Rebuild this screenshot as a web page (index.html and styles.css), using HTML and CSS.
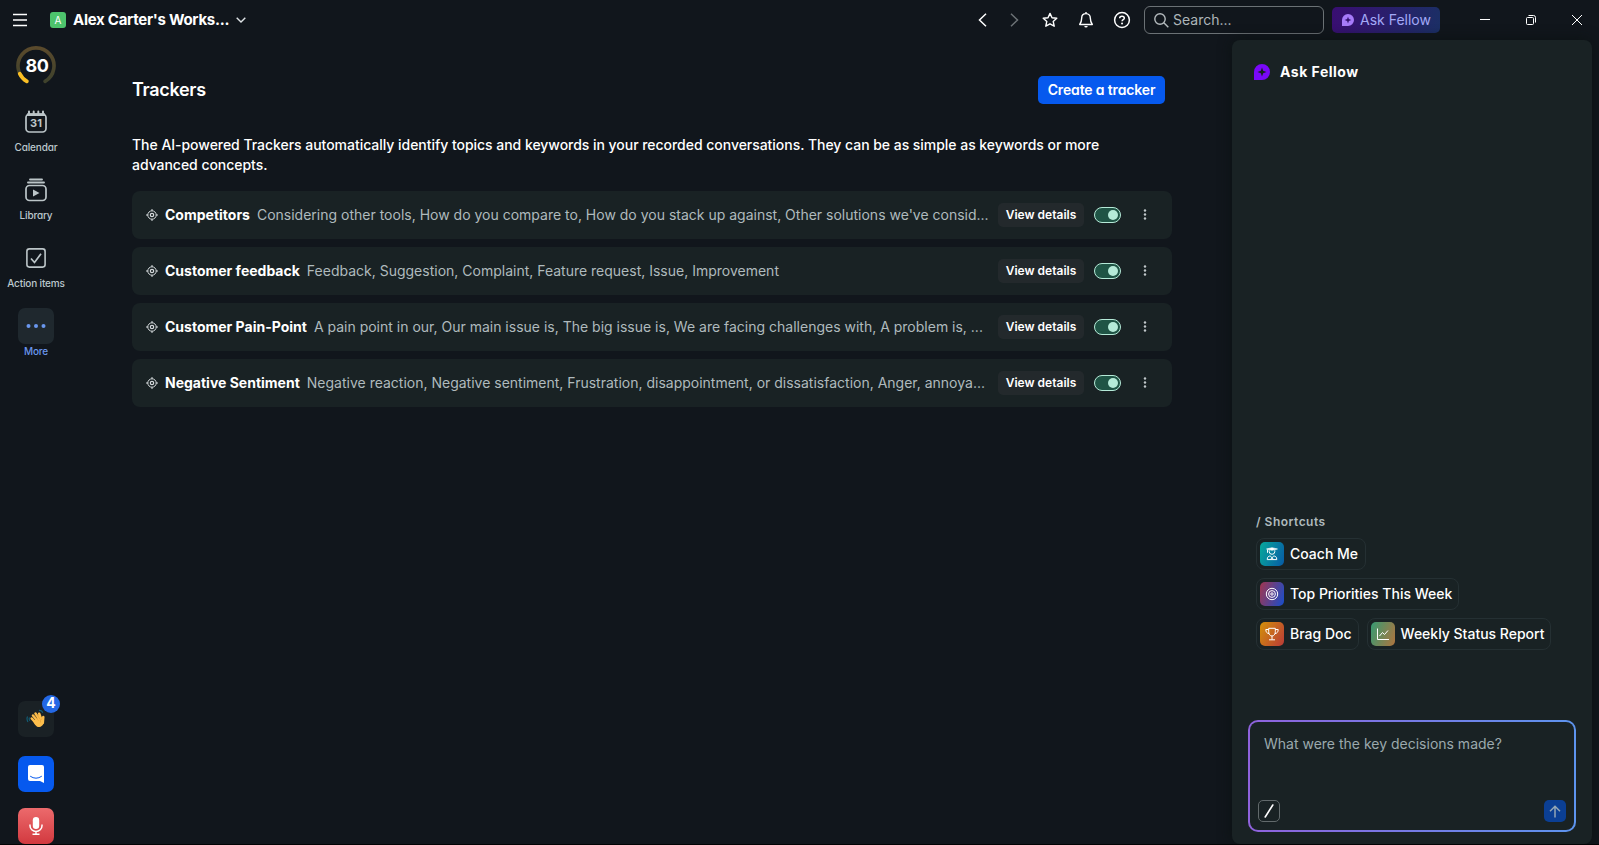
FILE: index.html
```html
<!DOCTYPE html>
<html lang="en">
<head>
    <meta charset="UTF-8">
    <meta name="viewport" content="width=device-width, initial-scale=1.0">
    <title>Trackers</title>
    <link rel="stylesheet" href="styles.css">
</head>
<body>

<header class="topbar">
    <div class="topbar-left">
        <svg class="menu" width="14" height="14" viewBox="0 0 14 14" fill="none" stroke="#fff" stroke-width="1.5"><path d="M0 1.5h14M0 7h14M0 12.5h14"/></svg>
        <span class="avatar">A</span>
        <span class="workspace">Alex Carter's Works...</span>
        <svg width="10" height="6" viewBox="0 0 10 6" fill="none" stroke="#dfe3e6" stroke-width="1.4"><path d="M.7.7L5 5 9.3.7"/></svg>
    </div>
    <div class="topbar-right">
        <svg class="nav-back" width="9" height="14" viewBox="0 0 9 14" fill="none" stroke="#fff" stroke-width="1.5"><path d="M8 .8L1.5 7 8 13.2"/></svg>
        <svg class="nav-next" width="9" height="14" viewBox="0 0 9 14" fill="none" stroke="#6c7276" stroke-width="1.5"><path d="M1 .8L7.5 7 1 13.2"/></svg>
        <svg class="nav-star" width="16" height="16" viewBox="0 0 16 16" fill="none" stroke="#fff" stroke-width="1.4" stroke-linejoin="round"><path d="M8 1.4l2 4.3 4.8.5-3.6 3.2 1 4.8L8 11.8l-4.2 2.4 1-4.8L1.2 6.2 6 5.7z"/></svg>
        <svg class="nav-bell" width="16" height="16" viewBox="0 0 16 16" fill="none" stroke="#fff" stroke-width="1.4" stroke-linejoin="round"><path d="M8 0v1.6M8 1.6c-2.700 0-4.300 2-4.300 4.400 0 3.300-.9 4.800-2 6.500h12.600c-1.100-1.700-2-3.200-2-6.500 0-2.400-1.600-4.400-4.300-4.400z"/><path d="M6.300 14.100h3.400a1.700 1.500 0 0 1-3.400 0z" fill="#fff" stroke="none"/></svg>
        <svg class="nav-help" width="18" height="18" viewBox="0 0 18 18" fill="none" stroke="#fff" stroke-width="1.5"><circle cx="9" cy="9" r="7.400"/><path d="M6.700 7.300c0-1.300 1-2.100 2.300-2.100s2.300.8 2.300 2c0 1.500-2.200 1.500-2.200 3"/><circle cx="9.050" cy="12.400" r="1" fill="#fff" stroke="none"/></svg>
        <div class="search">
            <svg width="15" height="15" viewBox="0 0 15 15" fill="none" stroke="#b4babd" stroke-width="1.4"><circle cx="6" cy="6" r="5.200"/><path d="M9.800 9.800l4.500 4.500"/></svg>
            <span>Search...</span>
        </div>
        <button class="ask-btn">
            <svg width="12" height="12" viewBox="0 0 16 16"><path fill="#a77bfa" fill-rule="evenodd" d="M8 0a8 8 0 1 1 0 16H0V8a8 8 0 0 1 8-8zM8 3.500L6.800 6.800 3.500 8l3.300 1.200L8 12.500l1.200-3.300L12.500 8 9.200 6.800z"/></svg>
            <span>Ask Fellow</span>
        </button>
        <div class="win-buttons">
            <span><svg width="10" height="10" viewBox="0 0 10 10" stroke="#fff" fill="none"><path d="M0 4.500h10"/></svg></span>
            <span><svg width="10" height="10" viewBox="0 0 10 10" stroke="#fff" fill="none"><rect x=".5" y="2.500" width="7" height="7" rx="1"/><path d="M2.500.5h5a2 2 0 0 1 2 2v5"/></svg></span>
            <span><svg width="10" height="10" viewBox="0 0 10 10" stroke="#fff" fill="none"><path d="M0 0l10 10M10 0L0 10"/></svg></span>
        </div>
    </div>
</header>

<div class="layout">
    <nav class="sidebar">
        <div class="score">
            <svg width="42" height="42" viewBox="0 0 42 42" fill="none" stroke-width="3.600" stroke-linecap="round">
                <defs><linearGradient id="ring" x1="0" y1="0" x2="0" y2="1"><stop offset="0" stop-color="#5a4a2c"/><stop offset="1" stop-color="#3f422c"/></linearGradient></defs>
                <path d="M11.900 36.400A18 18 0 1 1 30.100 36.400" stroke="url(#ring)"/>
                <path d="M11.900 36.400A18 18 0 0 1 4.700 28.600" stroke="#fbbf24"/>
            </svg>
            <span>80</span>
        </div>
        <a class="nav-item">
            <span class="nav-icon"><svg width="22" height="24" viewBox="0 0 22 24" fill="none" stroke="#bcc5c8"><rect x="1" y="4" width="20" height="18" rx="3.500" stroke-width="1.700"/><path d="M2 4.700h18" stroke-width="2.600"/><path d="M4 1.500v3M8.700 1.500v3M13.300 1.500v3M18 1.500v3" stroke-width="2" stroke-linecap="round"/><text x="11" y="17" class="cal-num">31</text></svg></span>
            <span class="nav-label">Calendar</span>
        </a>
        <a class="nav-item">
            <span class="nav-icon"><svg width="22" height="24" viewBox="0 0 22 24" fill="none" stroke="#bcc5c8"><path d="M5 1.500h12M3 4.500h16" stroke-width="1.900" stroke-linecap="round"/><rect x="1" y="7.500" width="20" height="15" rx="3.500" stroke-width="1.700"/><path d="M8 11.500v7l6.500-3.500z" fill="#bcc5c8" stroke="none"/></svg></span>
            <span class="nav-label">Library</span>
        </a>
        <a class="nav-item">
            <span class="nav-icon"><svg width="20" height="20" viewBox="0 0 20 20" fill="none" stroke="#bcc5c8"><rect x=".9" y=".9" width="18.200" height="18.200" rx="2.500" stroke-width="1.600"/><path d="M5 10.500l3.500 4L15 5.700" stroke-width="1.700"/></svg></span>
            <span class="nav-label">Action items</span>
        </a>
        <a class="nav-item active">
            <span class="nav-icon"><svg width="20" height="6" viewBox="0 0 20 6" fill="#6a97ee"><circle cx="2.500" cy="3" r="2"/><circle cx="10" cy="3" r="2"/><circle cx="17.500" cy="3" r="2"/></svg></span>
            <span class="nav-label">More</span>
        </a>
        <div class="sidebar-bottom">
            <div class="tile tile-wave">
                <svg width="20" height="20" viewBox="0 0 20 20">
                    <path d="M1.500 7.500Q.3 10 2 13M3.500 8.500q-.8 1.500.2 3.200M13 1.500q2.800-.5 3.800 2.300" fill="none" stroke="#12617a" stroke-width="1.100"/>
                    <g fill="none" stroke="#fdbe4c" stroke-width="2.500" stroke-linecap="round"><path d="M5.700 9.500l4.500 5M7 6.500l5 6M9.500 4.500l4.500 6.500M13.200 4.700l2 5.500M17.300 8l-.5 6"/></g>
                    <path d="M7 12l7.500-4.500 2.500 3c2 3-.3 7-3.500 7.500-3.500.4-5-3-6.500-6z" fill="#fdbe4c"/>
                    <path d="M8.200 6.500l4.300 5M10.800 5.400l3.400 5M16 9.500q-2.300 1.500-1.500 4" fill="none" stroke="#dc9530" stroke-width=".5"/>
                </svg>
                <span class="badge">4</span>
            </div>
            <div class="tile tile-chat">
                <svg width="16" height="18" viewBox="0 0 16 18"><path fill="#fff" d="M2 0h12a2 2 0 0 1 2 2V18l-4-2H2a2 2 0 0 1-2-2V2a2 2 0 0 1 2-2z"/><path d="M2.500 11.400q5.500 3.800 11 0" fill="none" stroke="#0659ee" stroke-linecap="round"/></svg>
            </div>
            <div class="tile tile-mic">
                <svg width="14" height="18" viewBox="0 0 14 18"><rect x="3.800" width="6.400" height="12" rx="3.200" fill="#fff"/><path d="M1 7.500v1.200a6 5.700 0 0 0 12 0V7.500M7 14.500v2.700M3.500 17.200h7" fill="none" stroke="#fff" stroke-width="1.500"/></svg>
            </div>
        </div>
    </nav>

    <main class="content">
        <div class="content-header">
            <h1>Trackers</h1>
            <button class="create-btn">Create a tracker</button>
        </div>
        <p class="intro">The AI-powered Trackers automatically identify topics and keywords in your recorded conversations. They can be as simple as keywords or more<br>advanced concepts.</p>
        <div class="tracker-list" id="trackerList"></div>
    </main>

    <aside class="ask-panel">
        <div class="ask-title">
            <svg width="16" height="16" viewBox="0 0 16 16"><path fill="#7a08fa" fill-rule="evenodd" d="M8 0a8 8 0 1 1 0 16H0V8a8 8 0 0 1 8-8zM8 3.500L6.800 6.800 3.500 8l3.300 1.200L8 12.500l1.200-3.300L12.500 8 9.200 6.800z"/></svg>
            <h2>Ask Fellow</h2>
        </div>
        <div class="shortcuts">
            <h3>/ Shortcuts</h3>
            <div class="chips">
                <div class="chip chip-coach">
                    <span class="chip-icon"><svg width="12" height="14" viewBox="0 0 12 14" fill="none" stroke="#fff"><path d="M.5 2L6 .7 11.500 2 6 3.300z" fill="#fff" stroke-width=".6"/><path d="M1.500 2.500v3.300M3.200 3.300v1.200a2.800 2.800 0 0 0 5.600 0V3.300M1.200 12.600c0-3 1.800-3.600 3-3.600L6 10.700 7.800 9c1.200 0 3 .6 3 3.600zM4.500 12.500L6 10.700l1.500 1.800"/></svg></span>
                    <span class="chip-text">Coach Me</span>
                </div>
                <div class="chip chip-top">
                    <span class="chip-icon"><svg width="14" height="14" viewBox="0 0 14 14" fill="none" stroke="#fff"><circle cx="7" cy="7" r="5.700"/><circle cx="7" cy="7" r="3.400"/><circle cx="7" cy="7" r="1.200"/></svg></span>
                    <span class="chip-text">Top Priorities This Week</span>
                </div>
                <div class="chip chip-brag">
                    <span class="chip-icon"><svg width="14" height="14" viewBox="0 0 14 14" fill="none" stroke="#fff"><path d="M3.700 1.300h6.600v3.500c0 2.500-1.400 4.200-3.300 4.200S3.700 7.300 3.700 4.800zM3.700 2.500H.8c0 2.500 1.200 4 3.400 4.200M10.300 2.500h2.900c0 2.500-1.200 4-3.400 4.200M7 9v3.500M4 12.800h6"/></svg></span>
                    <span class="chip-text">Brag Doc</span>
                </div>
                <div class="chip chip-weekly">
                    <span class="chip-icon"><svg width="14" height="14" viewBox="0 0 14 14" fill="none" stroke="#fff"><path d="M1.500 1.500v11h11.500M3.500 9l3-3.500 2 2 3.500-4"/></svg></span>
                    <span class="chip-text">Weekly Status Report</span>
                </div>
            </div>
        </div>
        <div class="prompt">
            <p>What were the key decisions made?</p>
            <div class="prompt-actions">
                <span class="slash"><svg width="10" height="14" viewBox="0 0 10 14"><path d="M1.200 13L8.800 1" stroke="#fff" stroke-width="1.600" stroke-linecap="round"/></svg></span>
                <span class="send"><svg width="12" height="13" viewBox="0 0 12 13" fill="none" stroke="#94a6b5" stroke-width="1.500"><path d="M6 12.500V1.500M1 6.300L6 1.300l5 5"/></svg></span>
            </div>
        </div>
    </aside>
</div>

<script>
    const trackers = [
        { name: "Competitors", keywords: "Considering other tools, How do you compare to, How do you stack up against, Other solutions we've consid..." },
        { name: "Customer feedback", keywords: "Feedback, Suggestion, Complaint, Feature request, Issue, Improvement" },
        { name: "Customer Pain-Point", keywords: "A pain point in our, Our main issue is, The big issue is, We are facing challenges with, A problem is, ..." },
        { name: "Negative Sentiment", keywords: "Negative reaction, Negative sentiment, Frustration, disappointment, or dissatisfaction, Anger, annoya..." }
    ];

    const trackerList = document.getElementById("trackerList");

    trackers.forEach((tracker) => {
        const row = document.createElement("div");
        row.classList.add("tracker");
        row.innerHTML = `
            <svg width="12" height="12" viewBox="0 0 12 12" fill="none" stroke="#d5dadc"><circle cx="6" cy="6" r="4.200"/><circle cx="6" cy="6" r="1.700" stroke-width="1.200"/><path d="M6 0v2M6 10v2M0 6h2M10 6h2"/></svg>
            <span class="tracker-name">${tracker.name}</span>
            <span class="tracker-keywords">${tracker.keywords}</span>
            <button class="details-btn">View details</button>
            <span class="toggle"></span>
            <svg class="dots" width="4" height="12" viewBox="0 0 4 12" fill="#c0c7ca"><circle cx="2" cy="1.500" r="1.200"/><circle cx="2" cy="5.500" r="1.200"/><circle cx="2" cy="9.500" r="1.200"/></svg>`;
        trackerList.appendChild(row);
    });
</script>

</body>
</html>
```
FILE: styles.css
```css
* {
    box-sizing: border-box;
}

body {
    font-family: Inter, 'Liberation Sans', sans-serif;
    margin: 0;
    height: 845px;
    overflow: hidden;
    background-color: #11161c;
    color: #fff;
    font-size: 14px;
    border-bottom: 1px solid #020304;
}

h1, h2, h3, p {
    margin: 0;
}

button {
    font-family: inherit;
    border: none;
    color: #fff;
    padding: 0;
}

svg {
    display: block;
    flex-shrink: 0;
}

.topbar {
    height: 40px;
    display: flex;
    align-items: center;
    justify-content: space-between;
}

.topbar-left {
    display: flex;
    align-items: center;
    padding-left: 13px;
}

.avatar {
    width: 16px;
    height: 16px;
    margin: 0 7px 0 23px;
    border-radius: 3px;
    background-color: #4dc36c;
    font-size: 10px;
    line-height: 16px;
    text-align: center;
}

.workspace {
    width: 163px;
    padding-bottom: 1px;
    font-size: 15px;
    font-weight: 700;
    letter-spacing: -0.27px;
    white-space: nowrap;
}

.topbar-right {
    display: flex;
    align-items: center;
}

.nav-back {
    margin-right: 23px;
}

.nav-next {
    margin-right: 23px;
}

.nav-star {
    margin-right: 20px;
}

.nav-bell {
    margin-right: 19px;
}

.nav-help {
    margin-right: 13px;
}

.search {
    width: 180px;
    height: 28px;
    display: flex;
    align-items: center;
    gap: 4px;
    padding-left: 9px;
    border: 1px solid #6b7175;
    border-radius: 6px;
    color: #adb5b9;
}

.search span,
.ask-btn span {
    padding-bottom: 1px;
}

.ask-btn {
    width: 108px;
    height: 26px;
    margin: 0 22px 0 8px;
    padding-left: 10px;
    display: flex;
    align-items: center;
    gap: 6px;
    border-radius: 5px;
    background: linear-gradient(100deg, #390e72, #1b2f65);
    color: #a3a9f7;
    font-size: 14px;
    white-space: nowrap;
}

.win-buttons {
    display: flex;
    margin-right: -1px;
}

.win-buttons span {
    width: 46px;
    display: flex;
    justify-content: center;
}

.layout {
    display: flex;
    height: 804px;
}

/* left rail */
.sidebar {
    width: 72px;
    display: flex;
    flex-direction: column;
    align-items: center;
}

.score {
    width: 42px;
    height: 42px;
    margin: 5px 0 17px;
    display: grid;
    place-items: center;
}

.score > * {
    grid-area: 1 / 1;
}

.score span {
    font-size: 18px;
    font-weight: 700;
    letter-spacing: -0.5px;
    margin-left: 2px;
    padding-bottom: 2px;
}

.nav-item {
    height: 68px;
    width: 72px;
    display: flex;
    flex-direction: column;
    align-items: center;
    color: #bcc8cd;
}

.nav-icon {
    width: 36px;
    height: 36px;
    display: flex;
    align-items: center;
    justify-content: center;
    border-radius: 7px;
}

.nav-label {
    font-size: 10px;
    font-weight: 500;
    line-height: 14px;
    letter-spacing: -0.15px;
    white-space: nowrap;
    font-feature-settings: "cv11";
}

.cal-num {
    font-size: 11px;
    font-weight: 700;
    text-anchor: middle;
    fill: #bcc5c8;
    stroke: none;
}

.active {
    color: #6a97ee;
}

.active .nav-icon {
    background-color: #1f282e;
}

.sidebar-bottom {
    margin-top: auto;
    display: flex;
    flex-direction: column;
}

.tile {
    width: 36px;
    height: 36px;
    display: flex;
    align-items: center;
    justify-content: center;
    border-radius: 7px;
}

.tile-wave {
    position: relative;
    background-color: #1a2125;
    margin-bottom: 19px;
}

.tile-chat {
    background-color: #0659ee;
    margin-bottom: 16px;
}

.tile-mic {
    background: linear-gradient(#ec6a6c, #d2393f);
}

.badge {
    position: absolute;
    top: -6px;
    right: -6px;
    width: 18px;
    height: 18px;
    border-radius: 50%;
    background-color: #2468e5;
    font-size: 14px;
    font-weight: 700;
    line-height: 16px;
    text-align: center;
}

/* trackers */
.content {
    width: 1160px;
    padding: 36px 60px 0;
}

.content-header {
    display: flex;
    align-items: center;
    justify-content: space-between;
    padding-right: 7px;
    margin-bottom: 31px;
}

.content-header h1 {
    font-size: 18px;
    font-weight: 600;
    letter-spacing: -0.3px;
    padding-bottom: 1px;
}

.create-btn {
    width: 127px;
    height: 28px;
    padding-bottom: 1px;
    border-radius: 5px;
    background-color: #0659ee;
    font-size: 14px;
    font-weight: 600;
    letter-spacing: -0.15px;
    white-space: nowrap;
    font-feature-settings: "cv11";
}

.intro {
    font-size: 14px;
    font-weight: 500;
    line-height: 20px;
    letter-spacing: -0.035px;
    white-space: nowrap;
    margin-bottom: 16px;
}

.tracker-list {
    display: flex;
    flex-direction: column;
    gap: 8px;
}

.tracker {
    height: 48px;
    display: flex;
    align-items: center;
    padding: 0 25px 0 14px;
    border-radius: 8px;
    background-color: #192224;
}

.tracker-name {
    margin: 0 7px;
    padding-bottom: 1px;
    font-weight: 700;
    white-space: nowrap;
}

.tracker-keywords {
    flex: 1;
    width: 0;
    padding-bottom: 1px;
    color: #afbabd;
    white-space: nowrap;
}

.details-btn {
    width: 86px;
    height: 24px;
    padding-bottom: 1px;
    border-radius: 5px;
    background-color: #23292c;
    font-size: 12px;
    font-weight: 600;
    white-space: nowrap;
}

.toggle {
    width: 27px;
    height: 16px;
    margin: 0 22px 0 10px;
    padding: 2px;
    display: flex;
    justify-content: flex-end;
    border: 1px solid #b5ead8;
    border-radius: 8px;
    background-color: #1f5445;
}

.toggle::after {
    content: '';
    width: 10px;
    height: 10px;
    border-radius: 50%;
    background-color: #b5ead8;
}

/* ask panel */
.ask-panel {
    width: 360px;
    display: flex;
    flex-direction: column;
    padding: 24px 16px 12px;
    border-radius: 8px;
    background-color: #192224;
    box-shadow: 0 0 14px rgba(10, 18, 16, 0.8);
}

.ask-title {
    display: flex;
    gap: 10px;
    padding-left: 6px;
    align-items: center;
    height: 16px;
}

.ask-title h2 {
    font-size: 14px;
    font-weight: 700;
    letter-spacing: 0.5px;
    padding-bottom: 2px;
}

.shortcuts {
    margin-top: auto;
    margin-bottom: 70px;
    padding-left: 8px;
}

.shortcuts h3 {
    font-size: 12px;
    font-weight: 600;
    line-height: 16px;
    letter-spacing: 0.5px;
    margin-bottom: 8px;
    color: #afbabd;
}

.chips {
    display: flex;
    flex-wrap: wrap;
    gap: 8px;
}

.chip {
    height: 32px;
    display: flex;
    align-items: center;
    gap: 6px;
    padding: 0 6px 0 3px;
    border: 1px solid #253033;
    border-radius: 8px;
    font-weight: 500;
    white-space: nowrap;
}

.chip-text {
    padding-bottom: 1px;
}

.chip-coach {
    padding-right: 7px;
    margin-right: 120px;
}

.chip-top {
    margin-right: 60px;
}

.chip-icon {
    width: 24px;
    height: 24px;
    display: flex;
    align-items: center;
    justify-content: center;
    border-radius: 5px;
}

.chip-coach .chip-icon {
    background: linear-gradient(110deg, #08a99b, #075aa6);
}

.chip-top .chip-icon {
    background: linear-gradient(110deg, #a2354e, #174ecc);
}

.chip-brag .chip-icon {
    background: linear-gradient(120deg, #d39109, #b93a38);
}

.chip-weekly .chip-icon {
    background: linear-gradient(110deg, #369b73, #b0743e);
}

.prompt {
    height: 112px;
    display: flex;
    flex-direction: column;
    justify-content: space-between;
    padding: 13px 8px 8px;
    border: 2px solid transparent;
    border-radius: 10px;
    background: linear-gradient(#192224, #192224) padding-box, linear-gradient(90deg, #8f62dc, #5d94ee) border-box;
    color: #9ba9ad;
}

.prompt p {
    line-height: 17px;
    padding-left: 6px;
}

.prompt-actions {
    display: flex;
    justify-content: space-between;
}

.slash,
.send {
    width: 22px;
    height: 22px;
    display: flex;
    align-items: center;
    justify-content: center;
    border-radius: 5px;
}

.slash {
    border: 1px solid #626a6c;
}

.send {
    background-color: #0b3f94;
}
```
